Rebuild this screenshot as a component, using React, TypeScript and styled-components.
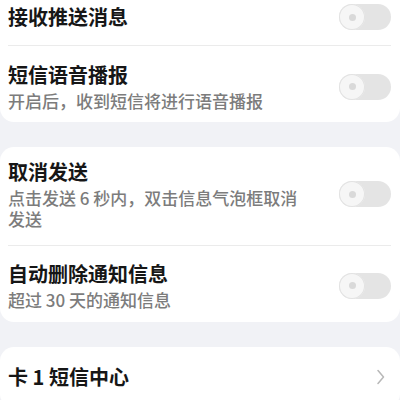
import React, { useState } from "react";
import styled, { createGlobalStyle } from "styled-components";

const GlobalStyle = createGlobalStyle`
  html, body {
    margin: 0;
    padding: 0;
    background: #f1f2f6;
  }
  body {
    font-family: "Noto Sans CJK SC", "Noto Sans", sans-serif;
    overflow: hidden;
  }
`;

type Item = {
  title: string;
  desc?: string;
  pad: [number, number];
};

const groups: Item[][] = [
  [
    { title: "接收推送消息", pad: [13, 15] },
    { title: "短信语音播报", desc: "开启后，收到短信将进行语音播报", pad: [16, 11] },
  ],
  [
    {
      title: "取消发送",
      desc: "点击发送 6 秒内，双击信息气泡框取消发送",
      pad: [12, 16],
    },
    { title: "自动删除通知信息", desc: "超过 30 天的通知信息", pad: [15, 12] },
  ],
];

const Toggle = () => {
  const [on, setOn] = useState(false);
  return (
    <Track $on={on} onClick={() => setOn(!on)}>
      <Knob $on={on}>
        <Dot />
      </Knob>
    </Track>
  );
};

const App = () => {
  return (
    <>
      <GlobalStyle />
      <Page>
        {groups.map((items, gi) => (
          <Card key={gi} $first={gi === 0}>
            {items.map((item, i) => (
              <Row key={item.title} $divider={i > 0} $top={item.pad[0]} $bottom={item.pad[1]}>
                <Texts>
                  <Title>{item.title}</Title>
                  {item.desc && <Desc>{item.desc}</Desc>}
                </Texts>
                <Toggle />
              </Row>
            ))}
          </Card>
        ))}
        <Card>
          <Row $top={17} $bottom={18}>
            <Texts>
              <Title>卡 1 短信中心</Title>
            </Texts>
            <Chevron viewBox="0 0 8 16" width="8" height="16">
              <path d="M1 1.5 L6.5 8 L1 14.5" fill="none" stroke="#b8b8b8" strokeWidth="1.5" strokeLinecap="round" strokeLinejoin="round" />
            </Chevron>
          </Row>
        </Card>
      </Page>
    </>
  );
};

const Page = styled.div`
  display: flex;
  flex-direction: column;
  gap: 25px;
  margin-top: -9px;
`;

const Card = styled.div<{ $first?: boolean }>`
  background: #ffffff;
  border-radius: ${(p) => (p.$first ? "0 0 14px 14px" : "14px")};
  padding: 0 9px 0 8px;
`;

const Row = styled.div<{ $divider?: boolean; $top: number; $bottom: number }>`
  display: flex;
  align-items: center;
  gap: 27px;
  padding: ${(p) => p.$top}px 0 ${(p) => p.$bottom}px;
  border-top: ${(p) => (p.$divider ? "1px solid #ebebeb" : "none")};
`;

const Texts = styled.div`
  flex: 1;
  display: flex;
  flex-direction: column;
  gap: 2px;
  min-width: 0;
`;

const Title = styled.div`
  font-size: 20px;
  line-height: 26px;
  font-weight: 700;
  color: #161616;
`;

const Desc = styled.div`
  font-size: 17px;
  line-height: 21px;
  font-weight: 500;
  color: #7c7c7c;
`;

const Track = styled.div<{ $on: boolean }>`
  flex-shrink: 0;
  width: 52px;
  height: 26px;
  border-radius: 13px;
  background: ${(p) => (p.$on ? "#3478f6" : "#e4e4e4")};
  display: flex;
  align-items: center;
  justify-content: ${(p) => (p.$on ? "flex-end" : "flex-start")};
  cursor: pointer;
`;

const Knob = styled.div<{ $on: boolean }>`
  width: 26px;
  height: 26px;
  border-radius: 50%;
  background: #f6f6f6;
  box-shadow: 0 0 0 1px #e2e2e2 inset;
  display: flex;
  align-items: center;
  justify-content: center;
`;

const Dot = styled.div`
  width: 7px;
  height: 7px;
  border-radius: 50%;
  background: #d9d9d9;
`;

const Chevron = styled.svg`
  flex-shrink: 0;
  margin-right: 6px;
`;

export default App;
